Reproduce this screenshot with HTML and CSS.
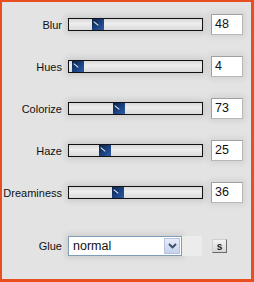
FILE: index.html
```html
<!DOCTYPE html>
<html lang="en">
<head>
  <meta charset="UTF-8" />
  <title>Dreamy filter</title>
  <link rel="stylesheet" href="styles.css">
</head>
<body>
  <div class="frame">
    <div class="rows">
      <div class="row">
        <label class="name">Blur</label>
        <div class="track"><div class="thumb" style="margin-left: 23px"></div></div>
        <div class="value">48</div>
      </div>
      <div class="row">
        <label class="name">Hues</label>
        <div class="track"><div class="thumb" style="margin-left: 3px"></div></div>
        <div class="value">4</div>
      </div>
      <div class="row">
        <label class="name">Colorize</label>
        <div class="track"><div class="thumb" style="margin-left: 44px"></div></div>
        <div class="value">73</div>
      </div>
      <div class="row">
        <label class="name">Haze</label>
        <div class="track"><div class="thumb" style="margin-left: 30px"></div></div>
        <div class="value">25</div>
      </div>
      <div class="row">
        <label class="name">Dreaminess</label>
        <div class="track"><div class="thumb" style="margin-left: 43px"></div></div>
        <div class="value">36</div>
      </div>
    </div>

    <div class="glue-row">
      <label class="name">Glue</label>
      <div class="select">
        <span class="select-text">normal</span>
        <span class="select-btn">
          <svg width="9" height="6" viewBox="0 0 9 6"><path d="M1 1 L4.5 4.5 L8 1" fill="none" stroke="#3a4a6a" stroke-width="1.8"/></svg>
        </span>
      </div>
      <div class="spacer"></div>
      <button class="s-btn">s</button>
    </div>
  </div>
</body>
</html>
```

FILE: styles.css
```css
* { box-sizing: border-box; }
html, body {
  margin: 0;
  padding: 0;
  width: 254px;
  height: 282px;
  overflow: hidden;
  font-family: "Liberation Sans", Arial, sans-serif;
  font-size: 11px;
  color: #111;
}
.frame {
  width: 254px;
  height: 282px;
  background: #e3e3e3;
  border-style: solid;
  border-color: #e84e1f;
  border-width: 2px 3px 3px 2px;
  padding-top: 12px;
}
.rows {
  display: flex;
  flex-direction: column;
  gap: 22px;
}
.row {
  display: grid;
  grid-template-columns: 60px 135px 34px;
  column-gap: 6px;
  align-items: center;
  height: 20px;
}
.row .value { margin-left: 2px; }
.name {
  justify-self: end;
  text-align: right;
  font-size: 11px;
  color: #111;
  white-space: nowrap;
}
.track {
  height: 13px;
  border: 1px solid #111;
  background: linear-gradient(to bottom, #d8d8d8, #eeeeee 40%, #dadada);
  box-shadow: 0 0 6px 2px rgba(0, 0, 0, 0.12);
  display: flex;
  align-items: stretch;
}
.thumb {
  width: 12px;
  background: linear-gradient(135deg, #0c2246 0%, #1a4283 55%, #2f5ca4 100%);
  position: relative;
}
.thumb::before {
  content: "";
  position: absolute;
  left: 1px;
  top: 4px;
  width: 6px;
  height: 1px;
  background: #e8eef8;
  transform: rotate(40deg);
}
.value {
  height: 21px;
  background: #fff;
  border: 1px solid #8c8c8c;
  border-color: #a0a0a0 #b8b8b8 #b8b8b8 #a0a0a0;
  font-size: 12.5px;
  line-height: 19px;
  padding-left: 3px;
  box-shadow: 0 0 6px 2px rgba(0, 0, 0, 0.08);
}
.glue-row {
  display: flex;
  align-items: center;
  margin-top: 34px;
  height: 20px;
}
.glue-row .name {
  width: 60px;
}
.select {
  margin-left: 6px;
  width: 114px;
  height: 20px;
  background: #fff;
  border: 1px solid #7f9db9;
  display: flex;
  align-items: stretch;
  box-shadow: 0 0 6px 2px rgba(0, 0, 0, 0.1);
}
.select-text {
  flex: 1;
  font-size: 12.5px;
  line-height: 18px;
  padding-left: 4px;
}
.select-btn {
  width: 16px;
  margin: 1px;
  border: 1px solid #b7c3dc;
  background: linear-gradient(to bottom, #e6ecf8, #c6d2ea);
  display: flex;
  align-items: center;
  justify-content: center;
}
.spacer {
  width: 20px;
  height: 20px;
  background: #ececec;
}
.s-btn {
  margin-left: 10px;
  width: 15px;
  height: 14px;
  padding: 0;
  border: 1px solid #8a8a8a;
  border-color: #cfcfcf #6a6a6a #6a6a6a #cfcfcf;
  background: linear-gradient(to bottom, #f2f2f2, #d6d6d6);
  font-size: 10px;
  font-weight: bold;
  line-height: 11px;
  color: #222;
}
```
